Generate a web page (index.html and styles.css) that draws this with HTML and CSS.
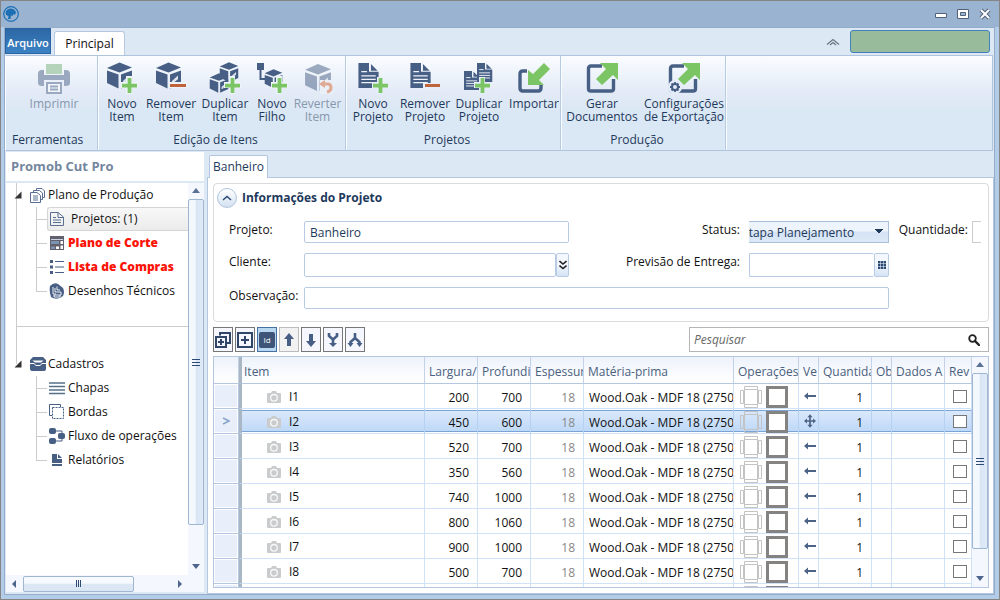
FILE: index.html
```html
<!DOCTYPE html>
<html lang="pt-BR">
<head>
<meta charset="utf-8">
<title>Promob Cut Pro</title>
<link rel="stylesheet" href="styles.css">
</head>
<body>
<svg class="defs" aria-hidden="true">
  <symbol id="cube" viewBox="0 0 27 27">
    <path d="M1 6 13.500 0.500 26 5.500 13.500 10.500Z"/>
    <path d="M1 8.500 12.500 12.500V26.500L1 21Z"/>
    <path d="M15 12.500 26 8.500V21.500L15 26.500Z"/>
    <path d="M17 21.500V19L23 13.500V20Z" fill="#eef3fa" opacity=".9"/>
    <path d="M19.500 20 25 15.500V21L19.500 23.500Z"/>
  </symbol>
  <symbol id="doc" viewBox="0 0 22 26">
    <path d="M0 0H11V9H21V26H0Z"/><path d="M13 1 20 8H13Z"/>
    <path d="M3 9H9M3 13.500H18M3 17H18M3 20.500H18" stroke="#eef3fa" stroke-width="1.300" fill="none"/>
  </symbol>
  <symbol id="plus" viewBox="0 0 16 16"><path d="M6 0H10V6H16V10H10V16H6V10H0V6H6Z" fill="#7cc564"/></symbol>
  <symbol id="cam" viewBox="0 0 14 12"><path d="M1 2H4L5 0H9L10 2H13Q14 2 14 3V11Q14 12 13 12H1Q0 12 0 11V3Q0 2 1 2Z" fill="#c9cbcc"/><circle cx="7" cy="6.800" r="3.300" fill="none" stroke="#f7f8f8" stroke-width="1.300"/></symbol>
  <symbol id="ops" viewBox="0 0 48 22">
    <g fill="none" stroke="#c3c3c3"><path d="M4.500 3.500H17.500V18.500H4.500Z"/><path d="M4.500 .5H17.500V3.500H4.500ZM4.500 18.500H17.500V21.500H4.500ZM.5 4.500H3.500V17.500H.5ZM18.500 4.500H21.500V17.500H18.500Z"/></g>
    <path d="M27.500 1.500H46.500V20.500H27.500Z" fill="#fff" stroke="#858282" stroke-width="3"/>
  </symbol>
  <symbol id="left" viewBox="0 0 12 12"><path d="M4 2.500V5H12V7H4V9.500L0 6Z" fill="#4d6385"/></symbol>
  <symbol id="all" viewBox="0 0 14 16"><path d="M7 0 10 3.500H8V7H10.500V5L14 8 10.500 11V9H8V12.500H10L7 16 4 12.500H6V9H3.500V11L0 8 3.500 5V7H6V3.500H4Z" fill="#4d6385"/></symbol>
  <symbol id="export" viewBox="0 0 32 32">
    <path d="M16 4H5Q2.500 4 2.500 6.500V27Q2.500 29 5 29H25Q27.500 29 27.500 27V17" fill="none" stroke="#475f85" stroke-width="3.400"/>
    <path d="M14 1H32V18L27 13 16 23 10 17 20 7Z" fill="#7cc564"/>
  </symbol>
</svg>
<div class="window">
  <header class="titlebar">
    <svg class="logo" viewBox="0 0 16 16"><circle cx="8" cy="8" r="7.300" fill="none" stroke="#1c6fb5" stroke-width="1.200"/><path d="M5 13 5.500 10 3 9 2.500 6Q4 2.500 8 2.500 12 3 13 6.500L12 9 10.500 8 9.500 10 8 9.500 7.500 13Z" fill="#1c6fb5"/></svg>
    <div class="controls">
      <button aria-label="Minimizar"><svg viewBox="0 0 12 12"><path d="M.5 5.500H11.500V9.500H.5Z" fill="#fff" stroke="#53627b"/></svg></button>
      <button aria-label="Maximizar"><svg viewBox="0 0 12 12"><path d="M.5 1.500H11.500V10.500H.5Z" fill="#fff" stroke="#53627b"/><path d="M3.500 4.500H8.500V7.500H3.500Z" fill="#9bb4d2" stroke="#53627b"/></svg></button>
      <button aria-label="Fechar"><svg viewBox="0 0 12 12"><path d="M2 2 10 10M10 2 2 10" stroke="#53627b" stroke-width="4"/><path d="M2 2 10 10M10 2 2 10" stroke="#fff" stroke-width="2"/></svg></button>
    </div>
  </header>
  <div class="frame">
    <nav class="tabs">
      <button class="tab-file">Arquivo</button>
      <button class="tab-main">Principal</button>
      <button class="collapse" aria-label="Recolher"><svg viewBox="0 0 14 8"><path d="M1 6.500 7 1.500 13 6.500M4 7 7 4.500 10 7" fill="none" stroke="#6b7585" stroke-width="1.200"/></svg></button>
      <div class="status-box"></div>
    </nav>
    <section class="ribbon">
      <div class="group tools">
        <div class="actions">
          <button class="off"><svg viewBox="0 0 32 32"><path d="M8 2H24V12H8Z" fill="#b4d3ba"/><path d="M4 8Q0 8 0 12V21Q0 24 4 24H6V18H26V24H28Q32 24 32 21V12Q32 8 28 8H26V13H6V8Z" fill="#9aa9bf"/><path d="M9 21H23V31H9ZM12 24.500H20M12 27.500H20" fill="#f1f5fa" stroke="#9aa9bf" stroke-width="2"/></svg>Imprimir</button>
        </div>
        <h2>Ferramentas</h2>
      </div>
      <div class="group items">
        <div class="actions">
          <button><svg viewBox="0 0 32 32"><use href="#cube" width="27" height="27"/><path d="M20 14H26V20H32V26H26V32H20V26H15V20H20Z" fill="#eef3fa"/><use href="#plus" x="16" y="16" width="15" height="15"/></svg>Novo<br>Item</button>
          <button><svg viewBox="0 0 32 32"><use href="#cube" width="27" height="27"/><path d="M14 20H32V26H14Z" fill="#eef3fa"/><path d="M15 22H31V25H15Z" fill="#c0623a"/></svg>Remover<br>Item</button>
          <button><svg viewBox="0 0 32 32"><use href="#cube" x="10" width="20" height="20"/><use href="#cube" x="0" y="11" width="20" height="20"/><path d="M20 14H26V20H32V26H26V32H20V26H15V20H20Z" fill="#eef3fa"/><use href="#plus" x="16" y="16" width="15" height="15"/></svg>Duplicar<br>Item</button>
          <button><svg viewBox="0 0 32 32"><path d="M1 1H8V8H1Z"/><path d="M4.500 7V17H9" fill="none" stroke="#475f85" stroke-width="2"/><use href="#cube" x="8" y="7" width="19" height="19"/><path d="M20 14H26V20H32V26H26V32H20V26H15V20H20Z" fill="#eef3fa"/><use href="#plus" x="16" y="16" width="15" height="15"/></svg>Novo<br>Filho</button>
          <button class="off"><svg viewBox="0 0 32 32"><g opacity=".5"><use href="#cube" x="2" y="1" width="28" height="29"/></g><path d="M18 18H31V32H18Z" fill="#e9f0f8"/><path d="M21 22H26Q29 22 29 26Q29 29 25 30" fill="none" stroke="#e0a995" stroke-width="3"/><path d="M17 22 23 18V26Z" fill="#e0a995"/></svg>Reverter<br>Item</button>
        </div>
        <h2>Edição de Itens</h2>
      </div>
      <div class="group projects">
        <div class="actions">
          <button><svg viewBox="0 0 32 32"><use href="#doc" x="1" y="1" width="22" height="25"/><path d="M20 15H26V20H32V26H26V32H20V26H15V20H20Z" fill="#e6eef8"/><use href="#plus" x="16" y="16" width="15" height="15"/></svg>Novo<br>Projeto</button>
          <button><svg viewBox="0 0 32 32"><use href="#doc" x="1" y="1" width="22" height="25"/><path d="M14 21H32V27H14Z" fill="#e6eef8"/><path d="M16 22H31V25H16Z" fill="#c0623a"/></svg>Remover<br>Projeto</button>
          <button><svg viewBox="0 0 32 32"><use href="#doc" x="14" y="1" width="16" height="19"/><use href="#doc" x="1" y="9" width="16" height="19"/><path d="M16 15H22V20H28V26H22V32H16V26H11V20H16Z" fill="#e6eef8"/><use href="#plus" x="12" y="16" width="15" height="15"/></svg>Duplicar<br>Projeto</button>
          <button><svg viewBox="0 0 32 32"><path d="M9 9H5Q2 9 2 12V26Q2 29 5 29H20Q23 29 23 26V22" fill="none" stroke="#475f85" stroke-width="3.400"/><path d="M26 1 32 7 21 18 26 23H10V8L15 12Z" fill="#7cc564"/></svg>Importar</button>
        </div>
        <h2>Projetos</h2>
      </div>
      <div class="group output">
        <div class="actions">
          <button><svg viewBox="0 0 32 32"><use href="#export"/></svg>Gerar<br>Documentos</button>
          <button><svg viewBox="0 0 32 32"><use href="#export"/><circle cx="7" cy="25" r="7" fill="#e3ecf7"/><circle cx="7" cy="25" r="3" fill="none" stroke="#475f85" stroke-width="2"/><path d="M7 20V22M7 28V30M2 25H4M10 25H12M3.500 21.500 5 23M9 27 10.500 28.500M3.500 28.500 5 27M9 23 10.500 21.500" stroke="#475f85" stroke-width="1.800"/></svg>Configurações<br>de Exportação</button>
        </div>
        <h2>Produção</h2>
      </div>
    </section>
    <div class="work">
      <aside class="side">
        <h1>Promob Cut Pro</h1>
        <div class="side-body">
          <div class="tree">
            <div class="root"><svg class="arrow" viewBox="0 0 8 8"><path d="M7.500 .5V7.500H.5Z" fill="#333"/></svg><svg viewBox="0 0 16 16" class="ic line"><path d="M6.500 3V1.500H12L14.500 4V10.500H13M3.500 5V3.500H9.500L12.500 6V12.500H10.500M.5 5.500H7L10.500 8.500V15.500H.5ZM3 9H8M3 11H8M3 13H8"/></svg>Plano de Produção</div>
            <ul>
              <li class="current"><a href="#"><svg viewBox="0 0 16 16" class="ic line"><path d="M1.500 1.500H9L14.500 6V14.500H1.500ZM9 1.500V6.500H14M4 6.500H7M4 9H12M4 11.500H12"/></svg>Projetos: (1)</a></li>
              <li class="alert"><a href="#"><svg viewBox="0 0 16 16" class="ic"><path d="M1 1H15V15H1Z" fill="#63606e"/><path d="M2 4.500H14" stroke="#c9d3e2"/><path d="M2 6H10V9H2ZM2 11.500H6V14H2Z" fill="#7d93b4"/><path d="M7 11.500H10V14H7ZM11.500 6H14V9H11.500ZM11.500 10.500H14V14H11.500Z" fill="#fff"/></svg>Plano de Corte</a></li>
              <li class="alert"><a href="#"><svg viewBox="0 0 16 16" class="ic"><path d="M1 1H4V4H1ZM1 6.500H4V9.500H1ZM1 12H4V15H1Z"/><path d="M6 2.500H15M6 8H15M6 13.500H15" stroke="#475f85" stroke-width="1.200"/></svg>Lista de Compras</a></li>
              <li class="last"><a href="#"><svg viewBox="0 0 16 16" class="ic"><path d="M1 3Q5-1 9 1L14 5Q16 9 14 13Q8 18 2 14Q0 8 1 3Z"/><path d="M4 4V11H7M6 5V9H12V12H5V14H11V12M8 3.500V7H11" fill="none" stroke="#fff" stroke-width=".9"/></svg>Desenhos Técnicos</a></li>
            </ul>
            <hr>
            <div class="root"><svg class="arrow" viewBox="0 0 8 8"><path d="M7.500 .5V7.500H.5Z" fill="#333"/></svg><svg viewBox="0 0 16 16" class="ic"><path d="M3 1H13L16 4V7H12L10 9H6L4 7H0V4Z"/><path d="M2.500 4.500H13.500L11 6.500H5Z" fill="#fff"/><path d="M0 8H4L6 10H10L12 8H16V13Q16 15 14 15H2Q0 15 0 13Z"/></svg>Cadastros</div>
            <ul>
              <li><a href="#"><svg viewBox="0 0 16 16" class="ic"><path d="M0 3H16M0 6.500H16M0 10H16M0 13.500H16" stroke="#55718a" stroke-width="1.400"/></svg>Chapas</a></li>
              <li><a href="#"><svg viewBox="0 0 16 16" class="ic"><path d="M3 11.500H.5V.5H11.500V3" fill="none" stroke="#475f85"/><path d="M3.500 3.500H14.500V14.500H3.500Z" fill="none" stroke="#475f85" stroke-dasharray="2 1"/></svg>Bordas</a></li>
              <li><a href="#"><svg viewBox="0 0 16 16" class="ic"><rect width="7" height="6" y="0" rx="2"/><rect width="7" height="6" y="10" rx="2"/><rect width="7" height="6" x="9" y="5" rx="2"/><path d="M7 3H13V5M13 11V13H7" fill="none" stroke="#475f85"/></svg>Fluxo de operações</a></li>
              <li class="last"><a href="#"><svg viewBox="0 0 16 16" class="ic"><path d="M3 2H8V7H13V14H3Z"/><path d="M9 2 13 6H9Z"/><path d="M3 11.500H13" stroke="#fff"/></svg>Relatórios</a></li>
            </ul>
          </div>
          <div class="vscroll"><i class="up"></i><div class="thumb"><i class="grip"></i></div><i class="down"></i></div>
        </div>
        <div class="hscroll"><i class="prev"></i><div class="thumb"><i class="grip"></i></div><i class="next"></i></div>
      </aside>
      <main class="content">
        <div class="doc-tabs"><button>Banheiro</button></div>
        <div class="page">
          <section class="info">
            <h3><button aria-label="Recolher informações"><svg viewBox="0 0 10 6"><path d="M1 5 5 1.500 9 5" fill="none" stroke="#2c4a73" stroke-width="1.500"/></svg></button>Informações do Projeto</h3>
            <form class="form">
              <label for="projeto">Projeto:</label><input id="projeto" class="h22" value="Banheiro">
              <label for="status" class="r">Status:</label><div class="clip h22"><select id="status"><option>Etapa Planejamento</option></select></div>
              <label for="qtd" class="r q">Quantidade:</label><input id="qtd" class="cut h22">
              <label for="cliente">Cliente:</label><div class="combo"><input id="cliente"><button type="button" aria-label="Buscar cliente"><svg viewBox="0 0 8 10"><path d="M.5 1 4 4 7.500 1M.5 5.500 4 8.500 7.500 5.500" fill="none" stroke="#222" stroke-width="1.600"/></svg></button></div>
              <label for="entrega" class="r">Previsão de Entrega:</label><div class="combo date"><input id="entrega"><button type="button" aria-label="Calendário"><svg viewBox="0 0 8 8"><path d="M0 0H8V8H0Z" fill="#2c4a73"/><path d="M0 2.500H8M0 5.500H8M2.500 0V8M5.500 0V8" stroke="#dce7f5" stroke-width=".6"/></svg></button></div>
              <label for="obs" class="c1">Observação:</label><input id="obs" class="wide h22">
            </form>
          </section>
          <div class="toolbar">
            <button aria-label="Adicionar vários"><svg viewBox="0 0 18 18"><path d="M6 4.500V2H16V12H13" fill="none" stroke="#2f4668" stroke-width="2"/><path d="M2 6H12V16H2ZM7 8V14M4 11H10" fill="none" stroke="#2f4668" stroke-width="2"/></svg></button>
            <button aria-label="Adicionar"><svg viewBox="0 0 18 18"><path d="M2 2H16V16H2ZM9 5V13M5 9H13" fill="none" stroke="#2f4668" stroke-width="2"/></svg></button>
            <button class="on" aria-label="Identificador"><span>Id</span></button>
            <button class="dim" aria-label="Subir"><svg viewBox="0 0 18 18"><path d="M9 2 14 8H11V15H7V8H4Z"/></svg></button>
            <button aria-label="Descer"><svg viewBox="0 0 18 18"><path d="M9 16 14 10H11V3H7V10H4Z"/></svg></button>
            <button aria-label="Unir"><svg viewBox="0 0 18 18"><path d="M5 2V5L9 8.500 13 5V2M9 8V13" fill="none" stroke="#475f85" stroke-width="2.600"/><path d="M5 12H13L9 16Z"/></svg></button>
            <button aria-label="Dividir"><svg viewBox="0 0 18 18"><path d="M9 2V7M4.500 13V11L9 7 13.500 11V13" fill="none" stroke="#475f85" stroke-width="2.600"/><path d="M1.500 12H7.500L4.500 16ZM10.500 12H16.500L13.500 16Z"/></svg></button>
            <div class="search"><input aria-label="Pesquisar" placeholder="Pesquisar"><svg viewBox="0 0 12 12"><circle cx="4.500" cy="4.500" r="3.300" fill="none" stroke="#222" stroke-width="1.800"/><path d="M7 7 11 11" stroke="#222" stroke-width="2.400" stroke-linecap="round"/></svg></div>
          </div>
          <div class="grid">
            <div class="grid-view">
            <table>
              <colgroup><col class="w25"><col><col class="w53"><col class="w53"><col class="w53"><col class="w150"><col class="w65"><col class="w20"><col class="w53"><col class="w20"><col class="w53"><col class="w27"></colgroup>
              <thead><tr><th></th><th class="item">Item</th><th>Largura/C</th><th>Profundid</th><th>Espessura</th><th>Matéria-prima</th><th>Operações</th><th>Ve</th><th>Quantida</th><th>Ob</th><th>Dados A</th><th>Rev</th></tr></thead>
              <tbody>
                <tr><td></td><td class="item"><svg><use href="#cam"/></svg>I1</td><td>200</td><td>700</td><td>18</td><td>Wood.Oak - MDF 18 (2750</td><td><svg><use href="#ops"/></svg></td><td><svg><use href="#left"/></svg></td><td>1</td><td></td><td></td><td><input type="checkbox" aria-label="Rev I1"></td></tr>
                <tr class="sel"><td><svg class="mark" viewBox="0 0 8 8"><path d="M1 1 7 4 1 7" fill="none" stroke="#8ba7cb" stroke-width="1.600"/></svg></td><td class="item"><svg><use href="#cam"/></svg>I2</td><td>450</td><td>600</td><td>18</td><td>Wood.Oak - MDF 18 (2750</td><td><svg><use href="#ops"/></svg></td><td><svg class="tall"><use href="#all"/></svg></td><td>1</td><td></td><td></td><td><input type="checkbox" aria-label="Rev I2"></td></tr>
                <tr><td></td><td class="item"><svg><use href="#cam"/></svg>I3</td><td>520</td><td>700</td><td>18</td><td>Wood.Oak - MDF 18 (2750</td><td><svg><use href="#ops"/></svg></td><td><svg><use href="#left"/></svg></td><td>1</td><td></td><td></td><td><input type="checkbox" aria-label="Rev I3"></td></tr>
                <tr><td></td><td class="item"><svg><use href="#cam"/></svg>I4</td><td>350</td><td>560</td><td>18</td><td>Wood.Oak - MDF 18 (2750</td><td><svg><use href="#ops"/></svg></td><td><svg><use href="#left"/></svg></td><td>1</td><td></td><td></td><td><input type="checkbox" aria-label="Rev I4"></td></tr>
                <tr><td></td><td class="item"><svg><use href="#cam"/></svg>I5</td><td>740</td><td>1000</td><td>18</td><td>Wood.Oak - MDF 18 (2750</td><td><svg><use href="#ops"/></svg></td><td><svg><use href="#left"/></svg></td><td>1</td><td></td><td></td><td><input type="checkbox" aria-label="Rev I5"></td></tr>
                <tr><td></td><td class="item"><svg><use href="#cam"/></svg>I6</td><td>800</td><td>1060</td><td>18</td><td>Wood.Oak - MDF 18 (2750</td><td><svg><use href="#ops"/></svg></td><td><svg><use href="#left"/></svg></td><td>1</td><td></td><td></td><td><input type="checkbox" aria-label="Rev I6"></td></tr>
                <tr><td></td><td class="item"><svg><use href="#cam"/></svg>I7</td><td>900</td><td>1000</td><td>18</td><td>Wood.Oak - MDF 18 (2750</td><td><svg><use href="#ops"/></svg></td><td><svg><use href="#left"/></svg></td><td>1</td><td></td><td></td><td><input type="checkbox" aria-label="Rev I7"></td></tr>
                <tr><td></td><td class="item"><svg><use href="#cam"/></svg>I8</td><td>500</td><td>700</td><td>18</td><td>Wood.Oak - MDF 18 (2750</td><td><svg><use href="#ops"/></svg></td><td><svg><use href="#left"/></svg></td><td>1</td><td></td><td></td><td><input type="checkbox" aria-label="Rev I8"></td></tr>
                <tr><td></td><td class="item"></td><td></td><td></td><td></td><td></td><td><svg><use href="#ops"/></svg></td><td></td><td></td><td></td><td></td><td></td></tr>
              </tbody>
            </table>
            </div>
            <div class="vscroll"><i class="up"></i><div class="thumb"><i class="grip"></i></div><i class="down"></i></div>
          </div>
        </div>
      </main>
    </div>
  </div>
</div>
</body>
</html>
```
FILE: styles.css
```css
* { box-sizing: border-box; }
body { margin: 0; font: 12px/16px "Open Sans", "Noto Sans", sans-serif; color: #1e395b; }
button, input, select { font: inherit; color: inherit; margin: 0; padding: 0; }
button { border: 0; background: none; }
h1, h2, h3, ul { margin: 0; padding: 0; }
svg { fill: #475f85; flex: none; }
.defs { display: none; }

.window { height: 100vh; display: flex; flex-direction: column; border: 1px solid #858585; background: #b3cce8; }
.titlebar { height: 26px; flex: none; display: flex; align-items: center; justify-content: space-between; padding: 0 8px 0 2px; background: #9ab3d1; }
.logo { width: 16px; height: 16px; }
.controls { display: flex; gap: 10px; }
.controls button { width: 12px; height: 12px; display: flex; }
.frame { flex: 1; min-height: 0; margin: 0 4px 4px 3px; display: flex; flex-direction: column; border: 1px solid #94acca; background: #dde8f5; }

.tabs { height: 27px; flex: none; display: flex; align-items: flex-end; }
.tab-file { width: 46px; height: 26px; background: linear-gradient(#2d67a5, #3b82c4); border: 1px solid #2a64a5; color: #fff; font-weight: 600; font-size: 11px; padding-top: 3px; margin-bottom: 1px; }
.tab-main { width: 71px; height: 24px; margin-left: 3px; background: #fff; border: 1px solid #b7c8e0; border-bottom: 0; border-radius: 3px 3px 0 0; color: #111; }
.collapse { margin-left: auto; margin-right: 10px; width: 14px; height: 26px; }
.collapse svg { width: 14px; height: 8px; }
.status-box { width: 140px; height: 23px; margin: 0 4px 2px 0; border: 1px solid #4180bd; border-radius: 3px; background: #98bc9b; }

.ribbon { height: 96px; flex: none; display: flex; margin-right: 1px; background: linear-gradient(#fafcff, #e2eaf6 40%, #dae7f4 60%, #dae7f4); border: 1px solid #b0c4de; border-left-color: #fff; }
.group { display: flex; flex-direction: column; justify-content: space-between; border-right: 1px solid #b9cbe0; box-shadow: 1px 0 #f8fbff; padding: 6px 0 2px; }
.actions { display: grid; align-items: start; }
.actions button { display: flex; flex-direction: column; align-items: center; line-height: 13px; white-space: nowrap; }
.actions svg { width: 32px; height: 32px; margin-bottom: 3px; }
.actions .off { color: #8797ad; }
.group h2 { font-size: 12px; font-weight: 400; line-height: 16px; text-align: center; padding-right: 12px; }
.tools { width: 92px; }
.tools h2 { text-align: left; padding: 0 0 0 6px; }
.tools .actions { grid-template-columns: 92px; padding-left: 2px; }
.items .actions { grid-template-columns: 48px 50px 58px 36px 55px; }
.projects .actions { grid-template-columns: 54px 50px 58px 52px; }
.output .actions { grid-template-columns: 82px 82px; }

.work { flex: 1; min-height: 0; display: flex; gap: 3px; padding: 1px 0 0 1px; }
.side { width: 198px; flex: none; display: flex; flex-direction: column; background: #fff; border-bottom: 2px solid #dde8f5; }
.side h1 { height: 31px; flex: none; padding: 0 5px; font-size: 13px; line-height: 29px; color: #74869e; border-bottom: 2px solid #dde8f5; }
.side-body { flex: 1; min-height: 0; display: flex; }
.tree { flex: 1; min-width: 0; white-space: nowrap; color: #111; overflow: hidden; }
.tree ul { list-style: none; }
.tree .ic { width: 16px; height: 16px; }
.line { fill: none; stroke: #5b6f94; }
.root { display: flex; align-items: center; gap: 2px; height: 24px; padding-left: 8px; background: linear-gradient(#ccc, #ccc) 10px 0 / 1px 100% no-repeat; }
.root .arrow { width: 8px; height: 8px; }
.root .ic { margin-left: 6px; }
.tree li { display: flex; height: 24px; padding-left: 30px; background: linear-gradient(#ccc, #ccc) 10px 0 / 1px 100% no-repeat; }
.tree hr ~ .root { background-size: 1px 12px; }
.tree hr ~ ul li { background: none; }
.tree li::before { content: ""; width: 11px; flex: none; background: linear-gradient(#ccc, #ccc) 0 0 / 1px 100% no-repeat, linear-gradient(#ccc, #ccc) 0 12px / 11px 1px no-repeat; }
.tree li.last::before { background-size: 1px 12px, 11px 1px; }
.tree a { flex: 1; display: flex; align-items: center; gap: 3px; padding-left: 2px; color: inherit; text-decoration: none; }
.current a { gap: 6px; border: 1px solid #d5d5d5; border-right: 0; border-radius: 3px 0 0 3px; background: linear-gradient(#f8f8f8, #ebebeb); padding-left: 1px; }
.alert a { color: #fb1407; font-weight: 800; }
.tree hr { height: 49px; margin: 0 0 0 10px; border: 0; border-left: 1px solid #ccc; background: linear-gradient(#ccc, #ccc) 0 23px / 100% 1px no-repeat; }

.vscroll { width: 16px; flex: none; display: flex; flex-direction: column; align-items: center; background: #f4f8fe; }
.vscroll i, .hscroll i { flex: none; border: 4px solid transparent; }
.vscroll .up { border-bottom: 5px solid #5a7296; border-top: 0; margin: 5px 0 6px; }
.vscroll .down { border-top: 5px solid #4d658c; border-bottom: 0; margin: auto 0 6px; }
.thumb { display: flex; align-items: center; justify-content: center; border: 1px solid #a0b6d0; border-radius: 2px; }
.vscroll .thumb { width: 16px; flex: 0 1 326px; background: linear-gradient(90deg, #f3f8fe 45%, #d8e5f5 50%, #e0eaf7); }
.vscroll .grip { width: 8px; height: 7px; border: 0; background: repeating-linear-gradient(#2c4a73 0 1px, transparent 1px 3px); }
.hscroll { height: 17px; flex: none; display: flex; align-items: center; background: #f4f8fe; padding: 0 22px 0 4px; }
.hscroll .thumb { width: 111px; height: 16px; margin-left: 7px; background: linear-gradient(#f6faff 45%, #dbe7f5 50%); }
.hscroll .prev { border-right-color: #4d658c; border-left-width: 2px; }
.hscroll .next { border-left-color: #4d658c; border-right: 0; margin-left: auto; }
.hscroll .grip { width: 5px; height: 7px; border: 0; background: repeating-linear-gradient(90deg, #2c4a73 0 1px, transparent 1px 2px); }

.content { flex: 1; min-width: 0; display: flex; flex-direction: column; }
.doc-tabs { display: flex; height: 25px; flex: none; padding: 3px 0 0 2px; }
.doc-tabs button { width: 59px; height: 23px; margin-bottom: -1px; background: #fff; border: 1px solid #b4c6e0; border-bottom: 0; border-radius: 2px 2px 0 0; z-index: 1; }
.page { flex: 1; min-height: 0; display: flex; flex-direction: column; background: #fff; border: 1px solid #b4c6e0; padding: 5px 4px 5px 5px; }
.info { flex: none; border: 1px solid #d9dbdd; border-radius: 4px; padding: 3px 7px 12px 3px; overflow: hidden; }
.info h3 { display: flex; align-items: center; gap: 5px; font-size: 12px; height: 22px; }
.info h3 button { width: 20px; height: 20px; display: flex; align-items: center; justify-content: center; border: 1px solid #b0c4de; border-radius: 50%; background: linear-gradient(#fff, #d3e1f2); }
.info h3 svg { width: 10px; height: 6px; }
.form { display: grid; grid-template-columns: 75px minmax(100px, 1fr) 180px 140px 83px 9px; gap: 10px 0; margin: 12px 0 0 12px; align-items: start; color: #111; }
.form label { line-height: 18px; white-space: nowrap; }
.form .r { text-align: right; padding-right: 9px; }
.form .q { padding-right: 4px; }
.form input { width: 100%; min-width: 0; border: 1px solid #b9cbe3; border-radius: 2px; padding: 1px 5px 0; color: #1e395b; background: #fff; }
.h22 { height: 22px; }
.form .cut { border-color: #ccc; border-right: 0; border-radius: 0; padding: 0; }
.form .c1 { grid-column: 1; }
.form .wide { grid-column: 2 / 5; }
.clip { overflow: hidden; display: flex; justify-content: flex-end; }
.clip select { flex: none; width: 148px; appearance: none; border: 1px solid #aabfdc; border-radius: 0; padding: 2px 0 0; color: #1e395b; background: linear-gradient(to top right, transparent 50%, #1e395b 50%) right 9px top 7px / 4px 5px no-repeat, linear-gradient(to top left, transparent 50%, #1e395b 50%) right 5px top 7px / 4px 5px no-repeat, linear-gradient(#eef4fc 45%, #d5e3f5 50%, #dce8f7); }
.combo { display: flex; height: 24px; }
.combo input { flex: 1; }
.combo button { width: 13px; border: 1px solid #b9cbe3; border-radius: 2px; background: linear-gradient(#f3f8fe 45%, #d5e3f5); display: flex; align-items: center; justify-content: center; }
.combo svg { width: 8px; height: 10px; }
.date input { border-right: 0; }
.date button { width: 15px; }
.date svg { height: 8px; }

.toolbar { flex: none; display: flex; gap: 2px; margin: 5px 0 4px; }
.toolbar button { width: 20px; height: 25px; border: 1px solid #777; background: #f6f6fe; display: flex; align-items: center; justify-content: center; }
.toolbar button svg { width: 18px; height: 18px; }
.toolbar .dim { background: #f2f2f2; border-color: #bcbcbc; }
.toolbar .on { background: #b9d7f1; border-color: #46709f; }
.toolbar .on span { width: 16px; height: 16px; border-radius: 2px; background: #3f5578; color: #fff; font-size: 8px; line-height: 16px; }
.search { width: 300px; margin-left: auto; height: 25px; display: flex; align-items: center; border: 1px solid #b5b5b5; padding-right: 8px; }
.search input { flex: 1; min-width: 0; border: 0; outline: 0; padding-left: 4px; font-style: italic; }
.search input::placeholder { color: #666; }
.search svg { width: 12px; height: 12px; }

.grid { flex: 1; min-height: 0; display: flex; border: 1px solid #b4c6e0; }
.grid-view { flex: 1; min-width: 0; overflow: hidden; }
table { width: 100%; table-layout: fixed; border-collapse: separate; border-spacing: 0; }
.w20 { width: 20px; } .w25 { width: 25px; } .w27 { width: 27px; } .w53 { width: 53px; } .w65 { width: 65px; } .w150 { width: 150px; }
th, td { padding: 0 5px; overflow: hidden; white-space: nowrap; vertical-align: middle; }
th { height: 27px; padding: 4px 0 0 4px; border-right: 1px solid #c3d2e6; border-bottom: 1px solid #b4c6e0; background: linear-gradient(#edf3fc, #fff); color: #4a5f7e; font-weight: 400; text-align: left; }
th.item, td.item { border-left: 3px solid #a9b6c4; text-align: left; color: #111; }
th.item { padding-left: 2px; color: #4a5f7e; }
td { height: 25px; border-right: 1px solid #cfe2f8; border-bottom: 1px solid #cfe2f8; color: #111; text-align: right; padding: 4px 8px 0 5px; }
td.item { padding: 2px 0 0 25px; }
td svg { display: block; }
td.item svg { width: 14px; height: 12px; display: inline-block; vertical-align: -2px; margin-right: 8px; }
td:first-child { background: #e8eefa; border-color: #b4c6e0; padding: 0 8px; box-shadow: inset 0 0 0 1px #fff; }
.mark { width: 8px; height: 8px; }
td:nth-child(5) { color: #888; }
td:nth-child(6) { text-align: left; padding-right: 3px; }
td:nth-child(7) { padding: 2px 6px 0; }
td:nth-child(7) svg { width: 48px; height: 22px; }
td:nth-child(8) { padding: 0 2px 0 5px; }
td:nth-child(8) svg { width: 12px; height: 12px; }
td:nth-child(8) svg.tall { height: 16px; }
td:nth-child(12) { padding: 0 4px 0 8px; }
.sel td:not(:first-child) { background: linear-gradient(#7ba4d6, #7ba4d6) 0 1px / 100% 1px no-repeat, linear-gradient(#7ba4d6, #7ba4d6) 0 22px / 100% 1px no-repeat, linear-gradient(#dce9fb, #bdd8f8) 0 1px / 100% 22px no-repeat; border-right-color: #b5d0f0; }
td input { appearance: none; display: block; width: 14px; height: 13px; border: 1px solid #777; background: #fff; }
.grid .thumb { flex-basis: 176px; }
```
